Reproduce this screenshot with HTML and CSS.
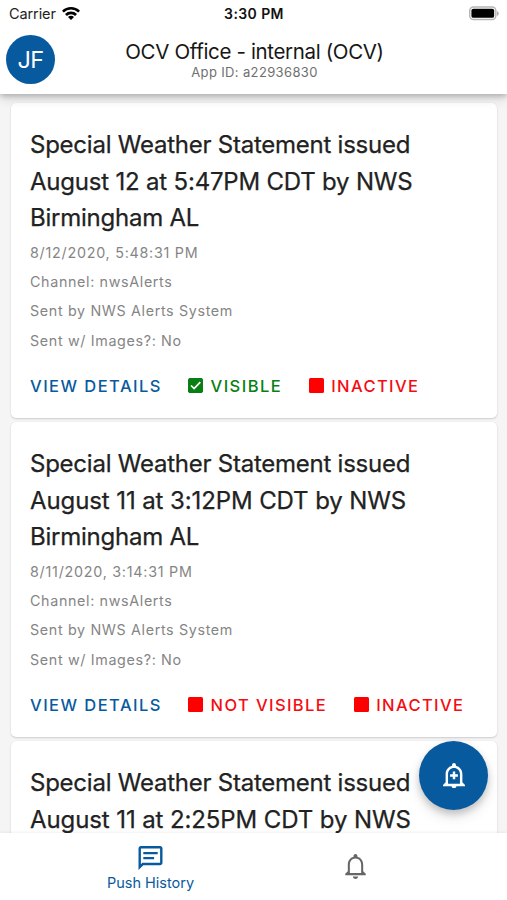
FILE: index.html
```html
<!DOCTYPE html>
<html lang="en">
<head>
<meta charset="utf-8">
<title>Push History</title>
<link rel="stylesheet" href="styles.css">
</head>
<body>
<div class="app">
  <header class="header">
    <div class="status">
      <div class="carrier"><span>Carrier</span>
        <svg class="wifi" viewBox="0 0 18 14"><path d="M0 4.7a12.8 12.8 0 0 1 18 0l-1.8 1.9a10.2 10.2 0 0 0-14.4 0zM3 8a8.5 8.5 0 0 1 12 0l-1.9 1.9a5.8 5.8 0 0 0-8.2 0zM6 11.1a4.2 4.2 0 0 1 6 0l-3 2.9z"/></svg>
      </div>
      <span class="time">3:30 PM</span>
      <svg class="battery" viewBox="0 0 31 15"><rect x=".75" y=".75" width="27" height="13" rx="4" fill="#fff" stroke="#b5b5b5" stroke-width="1.5"/><rect x="2.5" y="2.5" width="23.5" height="9.5" rx="2" fill="#000"/><path d="M29 5v5q1.700-.7 1.700-2.500T29 5" fill="#aaa"/></svg>
    </div>
    <div class="bar">
      <div class="avatar">JF</div>
      <div class="heading"><h1>OCV Office - internal (OCV)</h1><p>App ID: a22936830</p></div>
    </div>
  </header>
  <main class="list">
    <article class="card">
      <h2>Special Weather Statement issued<br><span class="when">August 12 at 5:47PM CDT by NWS</span><br>Birmingham AL</h2>
      <p class="stamp">8/12/2020, 5:48:31 PM</p>
      <p>Channel: nwsAlerts</p>
      <p>Sent by NWS Alerts System</p>
      <p>Sent w/ Images?: No</p>
      <div class="actions">
        <span class="details">VIEW DETAILS</span>
        <span class="flag on"><svg class="box" viewBox="0 0 15 15"><rect width="15" height="15" rx="1.4" fill="currentColor"/><path d="M3 7.5l3.100 3.100 6.200-6.400" fill="none" stroke="#fff" stroke-width="1.7"/></svg>VISIBLE</span>
        <span class="flag off"><i class="box"></i>INACTIVE</span>
      </div>
    </article>
    <article class="card">
      <h2>Special Weather Statement issued<br><span class="when alt">August 11 at 3:12PM CDT by NWS</span><br>Birmingham AL</h2>
      <p class="stamp">8/11/2020, 3:14:31 PM</p>
      <p>Channel: nwsAlerts</p>
      <p>Sent by NWS Alerts System</p>
      <p>Sent w/ Images?: No</p>
      <div class="actions">
        <span class="details">VIEW DETAILS</span>
        <span class="flag off"><i class="box"></i>NOT VISIBLE</span>
        <span class="flag off"><i class="box"></i>INACTIVE</span>
      </div>
    </article>
    <article class="card">
      <h2>Special Weather Statement issued<br><span class="when alt">August 11 at 2:25PM CDT by NWS</span></h2>
    </article>
  </main>
  <nav class="tabs">
    <div class="tab active">
      <svg class="chat" viewBox="2 2 20 20"><path d="M4 4h16v12H5.170L4 17.170V4m0-2c-1.100 0-1.990.9-1.990 2L2 22l4-4h14c1.100 0 2-.9 2-2V4c0-1.100-.9-2-2-2H4zm2 9.100h9v1.900H6v-1.900zm0-4.100h12v1.900H6V7z"/></svg>
      <span>Push History</span>
    </div>
    <div class="tab">
      <svg class="bell" viewBox="4 2.5 16 19.5"><path d="M12 22c1.100 0 2-.9 2-2h-4c0 1.100.9 2 2 2zm6-6v-5c0-3.070-1.630-5.640-4.500-6.320V4c0-.83-.67-1.500-1.500-1.500s-1.500.67-1.500 1.500v.68C7.640 5.360 6 7.920 6 11v5l-2 2v1h16v-1l-2-2zm-1.600 1.400H7.600V11c0-2.700 1.700-4.900 4.400-4.900s4.400 2.200 4.400 4.900v6.400z"/></svg>
    </div>
  </nav>
  <button class="fab" aria-label="Add notification">
    <svg viewBox="3 2 18 20.500"><path d="M10.010 21.010c0 1.100.89 1.490 1.990 1.490s1.990-.39 1.990-1.490h-3.980zM18.880 17.820V11c0-3.250-2.250-5.970-5.290-6.690v-.72C13.590 2.710 12.880 2 12 2s-1.590.71-1.590 1.590v.72C7.370 5.030 5.120 7.750 5.120 11v6.820L3 19.940V21h18v-1.060l-2.120-2.120zM16.880 19H7.120v-8c0-2.700 2.180-4.880 4.880-4.880s4.880 2.180 4.880 4.880v8zM13 9h-2v2.200H8.800v2H11v2.200h2v-2.200h2.200v-2H13V9z"/></svg>
  </button>
</div>
</body>
</html>
```
FILE: styles.css
```css
* { box-sizing: border-box; }
body { margin: 0; font-family: Inter, "Liberation Sans", sans-serif; background: #f5f5f5; }
h1, h2, p { margin: 0; font-weight: 400; white-space: nowrap; }
svg { display: block; fill: currentColor; }
.app { position: relative; height: 900px; display: flex; flex-direction: column; overflow: hidden; }
.header { position: relative; z-index: 2; flex: none; height: 94px; background: #fff; box-shadow: 0 2px 5px rgba(0,0,0,.2), 0 5px 10px rgba(0,0,0,.13); }
.status { display: grid; grid-template-columns: 1fr auto 1fr; align-items: center; height: 27px; padding: 0 8px 0 9px; font-size: 14.500px; color: #222; }
.carrier { display: flex; align-items: center; gap: 6px; letter-spacing: -.1px; }
.wifi { width: 18px; height: 14px; color: #000; margin-top: -1px; }
.time { font-weight: 600; font-size: 14px; color: #111; letter-spacing: .4px; }
.battery { width: 30px; height: 15px; justify-self: end; }
.bar { display: grid; grid-template-columns: 49px 1fr 49px; padding: 8px 6px 0; }
.avatar { width: 49px; height: 49px; border-radius: 50%; background: #085a9e; color: #fff; font-size: 23.500px; letter-spacing: -.7px; display: flex; align-items: center; justify-content: center; }
.heading { text-align: center; padding: 5px 0 0 2px; }
.heading h1 { font-size: 20.500px; line-height: 24px; color: #161616; letter-spacing: -.35px; }
.heading p { font-size: 13px; line-height: 17px; color: #6f6f6f; letter-spacing: .36px; }
.list { flex: 1; min-height: 0; overflow: hidden; padding: 9px 10px 0 11px; display: flex; flex-direction: column; gap: 4px; }
.card { flex: none; height: 315px; background: #fff; border-radius: 5px; padding: 24px 19px 0; box-shadow: 0 1px 2px rgba(0,0,0,.16), 0 0 1px rgba(0,0,0,.08); }
.card h2 { font-size: 24px; line-height: 36.600px; color: #222; -webkit-text-stroke: .25px #222; letter-spacing: -.24px; margin-bottom: 1px; }
.when { letter-spacing: -.2px; }
.when.alt { letter-spacing: -.1px; }
.card p { font-size: 14.300px; line-height: 29.300px; color: #858585; letter-spacing: .65px; }
.card .stamp { letter-spacing: .75px; }
.actions { display: flex; align-items: center; margin-top: 20px; height: 22px; font-size: 16.500px; letter-spacing: 1.450px; font-weight: 500; white-space: nowrap; }
.details { flex: none; width: 158px; color: #085a9e; }
.flag { flex: none; display: flex; align-items: center; gap: 7.500px; margin-right: 26.500px; }
.box { flex: none; width: 15px; height: 15px; border-radius: 1.500px; margin-top: -1px; }
.on { color: #087f12; }
.off { color: #f50c12; letter-spacing: 1.400px; }
.off .box { background: #f00; }
.tabs { position: relative; z-index: 1; flex: none; height: 67px; display: flex; justify-content: center; background: #fff; box-shadow: 0 -1px 3px rgba(0,0,0,.06); padding-right: 1px; }
.tab { width: 205px; display: flex; flex-direction: column; align-items: center; color: #666; padding-top: 21px; }
.active { color: #085a9e; padding-top: 13px; }
.tab span { font-size: 14.500px; line-height: 20px; margin-top: 2.500px; white-space: nowrap; }
.chat { width: 25px; height: 24px; }
.bell { width: 21px; height: 25px; }
.fab { position: absolute; z-index: 3; left: 419px; top: 741px; width: 69px; height: 69px; border: 0; padding: 0; border-radius: 50%; background: #085a9e; color: #fff; display: flex; align-items: center; justify-content: center; box-shadow: 0 4px 7px rgba(0,0,0,.18), 0 7px 14px rgba(0,0,0,.1); }
.fab svg { width: 22px; height: 25px; }
```
